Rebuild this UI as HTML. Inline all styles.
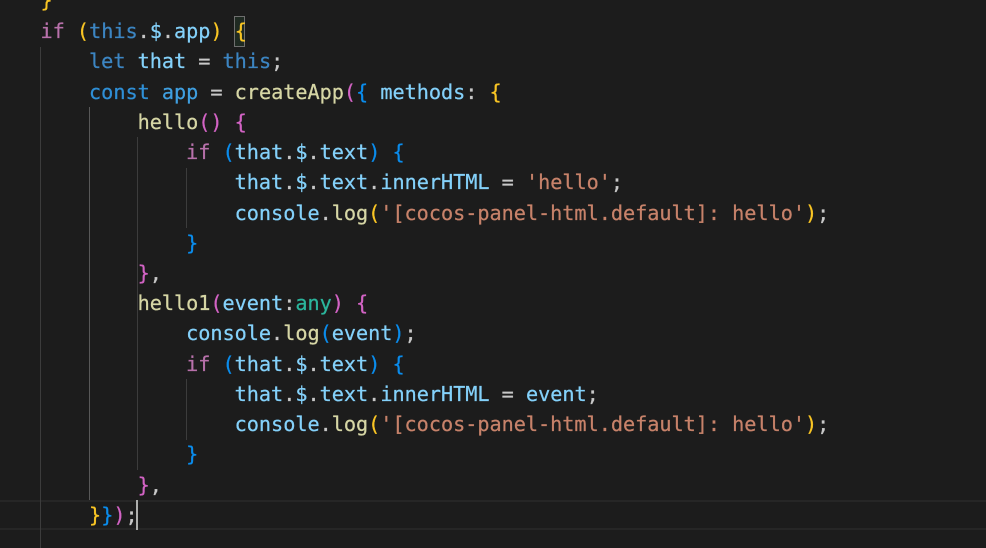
<!DOCTYPE html>
<html><head><meta charset="utf-8"><style>
html,body{margin:0;padding:0;background:#1c1c1c;width:986px;height:548px;overflow:hidden}
#e{position:relative;width:986px;height:548px;overflow:hidden;font-family:"DejaVu Sans Mono","Liberation Mono",monospace;font-size:20.2px;letter-spacing:-.02px;color:#c8c8c8}
.l{position:absolute;left:40.5px;white-space:pre;height:30px;line-height:30px;-webkit-text-stroke:.25px currentColor;filter:blur(.25px)}
.g{position:absolute;width:1.4px;background:#3c3c3c}
.k{color:#b871ab}.t{color:#3c85c2}.v{color:#84d1fa}.c{color:#2f8fd6}.a{color:#3f9fe0}.f{color:#d6d6a5}.s{color:#c7826a}.y{color:#f9c524}.p{color:#d263c4}.b{color:#0a8cec}.u{color:#2bb59c}
</style></head><body><div id="e">
<div style="position:absolute;left:0;top:499.5px;width:986px;height:30px;border-top:2px solid #262626;border-bottom:2px solid #262626;box-sizing:border-box"></div>
<div class="g" style="left:40px;top:47px;height:501px"></div>
<div class="g" style="left:89px;top:107px;height:393px;background:#585858"></div>
<div class="g" style="left:137px;top:137px;height:333px"></div>
<div class="g" style="left:186px;top:168px;height:60px"></div>
<div class="g" style="left:186px;top:379px;height:61px"></div>
<div style="position:absolute;left:234px;top:16px;width:11px;height:31px;border:1px solid #6e6e6e;box-sizing:border-box;background:#1f2a22"></div>
<div style="position:absolute;left:136px;top:500px;width:2px;height:30px;background:#aeafad"></div>
<div class="l" style="top:-15px"><span class="y">}</span></div>
<div class="l" style="top:16px"><span class="k">if</span> <span class="y">(</span><span class="t">this</span>.<span class="v">$</span>.<span class="v">app</span><span class="y">)</span> <span class="y">{</span></div>
<div class="l" style="top:46px">    <span class="t">let</span> <span class="v">that</span> = <span class="t">this</span>;</div>
<div class="l" style="top:77px">    <span class="c">const</span> <span class="a">app</span> = <span class="f">createApp</span><span class="p">(</span><span class="b">{</span> <span class="v">methods</span>: <span class="y">{</span></div>
<div class="l" style="top:107px">        <span class="f">hello</span><span class="p">()</span> <span class="p">{</span></div>
<div class="l" style="top:137px">            <span class="k">if</span> <span class="b">(</span><span class="v">that</span>.<span class="v">$</span>.<span class="v">text</span><span class="b">)</span> <span class="b">{</span></div>
<div class="l" style="top:167px">                <span class="v">that</span>.<span class="v">$</span>.<span class="v">text</span>.<span class="v">innerHTML</span> = <span class="s">'hello'</span>;</div>
<div class="l" style="top:198px">                <span class="v">console</span>.<span class="f">log</span><span class="y">(</span><span class="s">'[cocos-panel-html.default]: hello'</span><span class="y">)</span>;</div>
<div class="l" style="top:228px">            <span class="b">}</span></div>
<div class="l" style="top:258px">        <span class="p">}</span>,</div>
<div class="l" style="top:288px">        <span class="f">hello1</span><span class="p">(</span><span class="v">event</span>:<span class="u">any</span><span class="p">)</span> <span class="p">{</span></div>
<div class="l" style="top:318px">            <span class="v">console</span>.<span class="f">log</span><span class="b">(</span><span class="v">event</span><span class="b">)</span>;</div>
<div class="l" style="top:349px">            <span class="k">if</span> <span class="b">(</span><span class="v">that</span>.<span class="v">$</span>.<span class="v">text</span><span class="b">)</span> <span class="b">{</span></div>
<div class="l" style="top:379px">                <span class="v">that</span>.<span class="v">$</span>.<span class="v">text</span>.<span class="v">innerHTML</span> = <span class="v">event</span>;</div>
<div class="l" style="top:409px">                <span class="v">console</span>.<span class="f">log</span><span class="y">(</span><span class="s">'[cocos-panel-html.default]: hello'</span><span class="y">)</span>;</div>
<div class="l" style="top:439px">            <span class="b">}</span></div>
<div class="l" style="top:470px">        <span class="p">}</span>,</div>
<div class="l" style="top:500px">    <span class="y">}</span><span class="b">}</span><span class="p">)</span>;</div>
</div></body></html>
